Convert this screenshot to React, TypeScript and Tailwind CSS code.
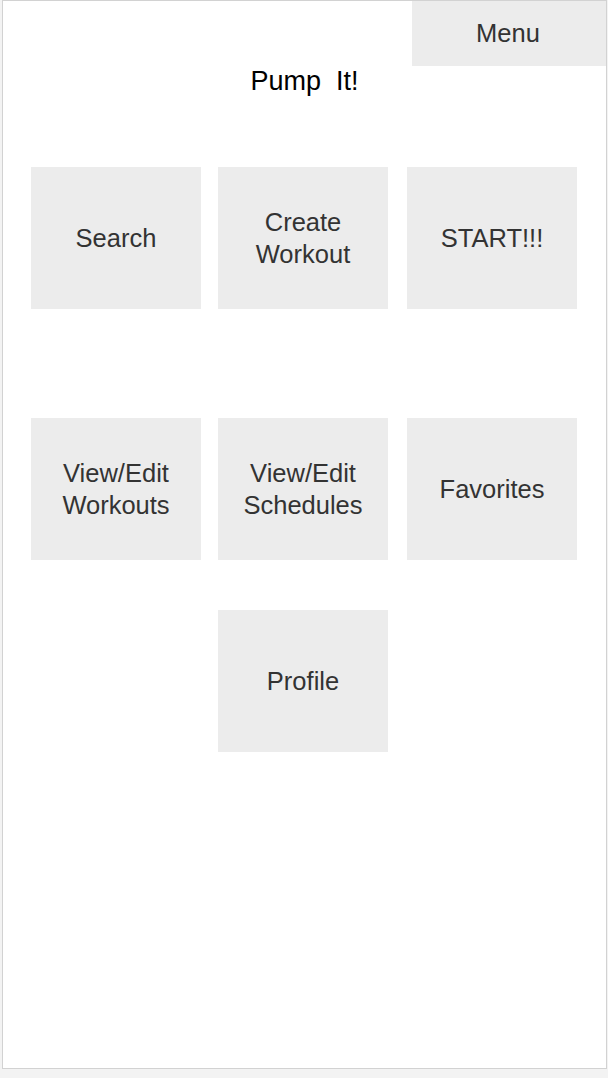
import React from 'react';

function Tile({ label, className = '' }: { label: React.ReactNode; className?: string }) {
  return (
    <div className={`w-[170px] h-[142px] shrink-0 bg-[#ececec] flex items-center justify-center text-center text-[25.5px] leading-[32px] text-[#333333] ${className}`}>
      {label}
    </div>
  );
}

export default function App() {
  return (
    <div className="w-[608px] h-[1078px] bg-[#f3f3f3] font-['Liberation_Sans',Arial,sans-serif]">
      <div className="ml-[2px] w-[605px] h-[1069px] bg-white border border-[#d2d2d2] flex flex-col">
        <div className="flex justify-end">
          <div className="w-[194px] h-[65px] bg-[#ececec] flex items-center justify-center text-[25.5px] text-[#333333] pr-[2px]">
            Menu
          </div>
        </div>
        <div className="text-center text-[27px] leading-[30px] text-black whitespace-pre">
          {'Pump  It!'}
        </div>

        <div className="pl-[28px] pt-[71px] flex flex-col">
          <div className="flex">
            <Tile label="Search" />
            <Tile label={<>Create<br />Workout</>} className="ml-[17px]" />
            <Tile label="START!!!" className="ml-[19px]" />
          </div>
          <div className="flex mt-[109px]">
            <Tile label={<>View/Edit<br />Workouts</>} />
            <Tile label={<>View/Edit<br />Schedules</>} className="ml-[17px]" />
            <Tile label="Favorites" className="ml-[19px]" />
          </div>
          <div className="flex mt-[50px] pl-[187px]">
            <Tile label="Profile" />
          </div>
        </div>
      </div>
    </div>
  );
}
